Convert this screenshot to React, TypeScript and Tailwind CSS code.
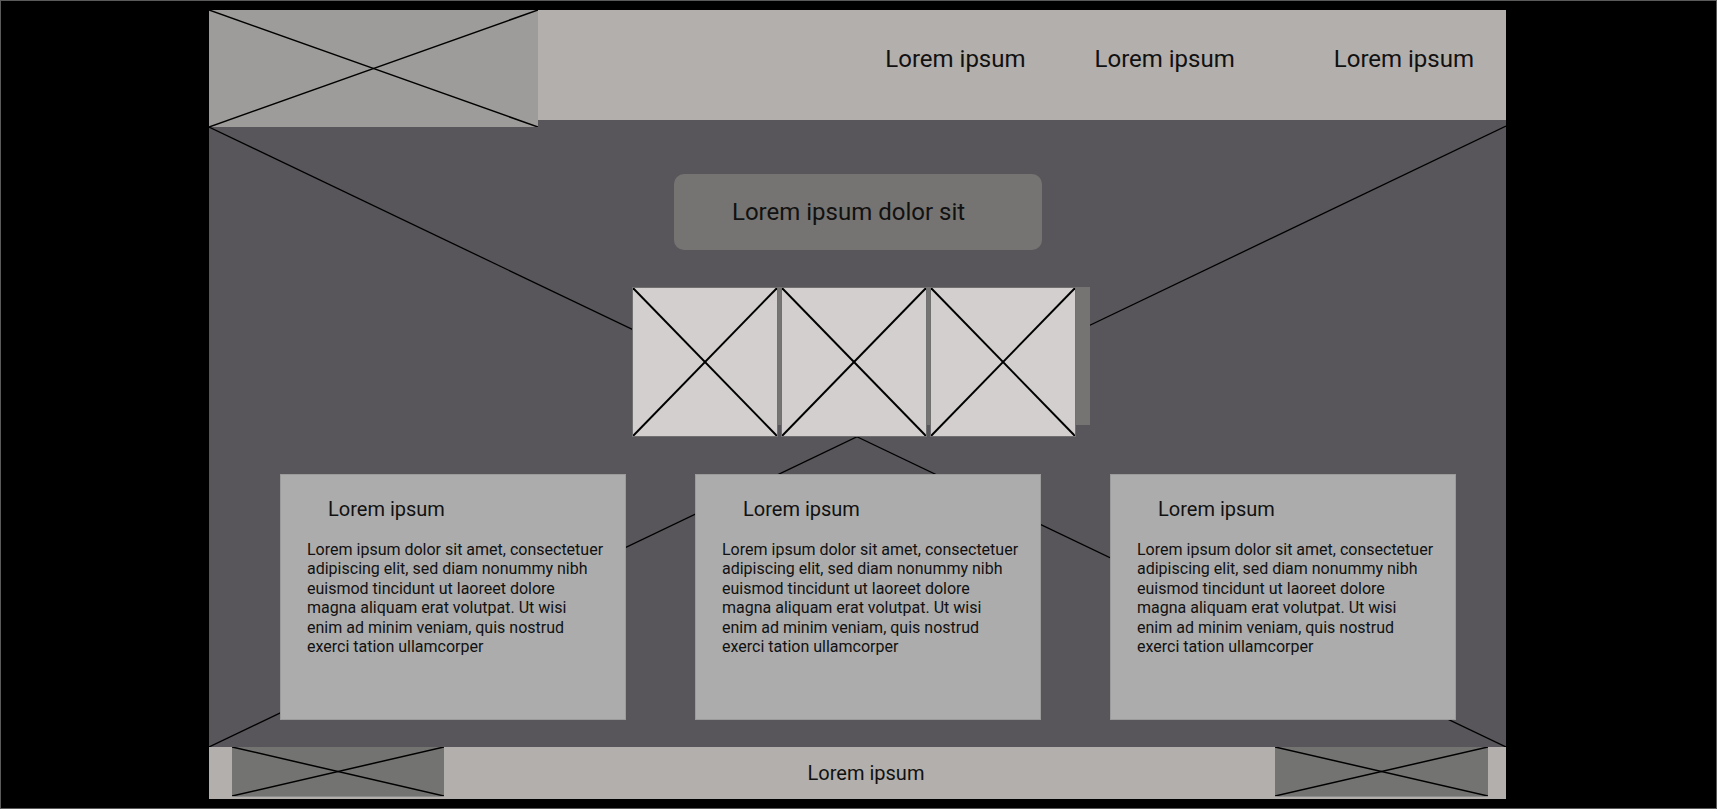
// Placeholder image: a filled box with a cross drawn corner to corner
function XBox({ className, stroke = 1.5 }: { className: string; stroke?: number }) {
  return (
    <div className={`relative shrink-0 ${className}`}>
      <svg className="absolute inset-0 w-full h-full" viewBox="0 0 100 100" preserveAspectRatio="none">
        <line x1="0" y1="0" x2="100" y2="100" stroke="#000" strokeWidth={stroke} vectorEffect="non-scaling-stroke" />
        <line x1="0" y1="100" x2="100" y2="0" stroke="#000" strokeWidth={stroke} vectorEffect="non-scaling-stroke" />
      </svg>
    </div>
  )
}

const BODY_LINES = [
  'Lorem ipsum dolor sit amet, consectetuer',
  'adipiscing elit, sed diam nonummy nibh',
  'euismod tincidunt ut laoreet dolore',
  'magna aliquam erat volutpat. Ut wisi',
  'enim ad minim veniam, quis nostrud',
  'exerci tation ullamcorper',
]

function Card({ title }: { title: string }) {
  return (
    <div className="w-[346px] h-[246px] shrink-0 bg-[#acacac] border border-[#9b9b9b] text-[#111]">
      <h3 className="pl-[47px] pt-[23px] text-[20px] leading-[23px] font-normal">{title}</h3>
      <p className="pl-[26px] pt-[19px] text-[16px] leading-[19.4px] whitespace-nowrap">
        {BODY_LINES.map((line) => (
          <span key={line} className="block">{line}</span>
        ))}
      </p>
    </div>
  )
}

export default function App() {
  return (
    <div className="w-[1717px] h-[809px] bg-black border border-[#5a5a5a] pl-[208px] pt-[9px] font-['Roboto',sans-serif] overflow-hidden">
      <div className="w-[1297px] flex flex-col">
        {/* Header */}
        <header className="flex h-[110px] bg-[#b3afac]">
          <XBox className="z-10 w-[329px] h-[117px] bg-[#9d9c9a]" />
          <nav className="flex-1 flex justify-end items-start pt-[35px] pr-[32px] text-[24px] leading-[28px] text-[#111]">
            <span>Lorem ipsum</span>
            <span className="ml-[69px]">Lorem ipsum</span>
            <span className="ml-[99px]">Lorem ipsum</span>
          </nav>
        </header>

        {/* Main */}
        <main className="relative h-[627px] bg-[#58565b]">
          <svg className="absolute inset-0" width="1297" height="627">
            <line x1="0" y1="7" x2="1297" y2="627" stroke="#000" strokeWidth="1.3" />
            <line x1="1297" y1="6" x2="0" y2="627" stroke="#000" strokeWidth="1.3" />
          </svg>

          <div className="relative flex flex-col">
            <div className="mt-[54px] ml-[465px] w-[368px] h-[76px] rounded-[10px] bg-[#767472] flex items-center pl-[58px] text-[24px] leading-[28px] text-[#111]">
              Lorem ipsum dolor sit
            </div>

            <div className="mt-[37px] ml-[423px] w-[458px] h-[138px] bg-[#757472] flex items-start gap-[3px]">
              <XBox className="w-[146px] h-[150px] bg-[#d4cfcf] border border-[#707070]" stroke={2} />
              <XBox className="w-[146px] h-[150px] bg-[#d4cfcf] border border-[#707070]" stroke={2} />
              <XBox className="w-[146px] h-[150px] bg-[#d4cfcf] border border-[#707070]" stroke={2} />
            </div>

            <div className="mt-[49px] flex pl-[71px] gap-[69px]">
              <Card title="Lorem ipsum" />
              <Card title="Lorem ipsum" />
              <Card title="Lorem ipsum" />
            </div>
          </div>
        </main>

        {/* Footer */}
        <footer className="flex items-start h-[52px] bg-[#b3afac]">
          <XBox className="ml-[23px] w-[212px] h-[50px] bg-[#737472] border-b border-[#8c8c8c]" />
          <div className="flex-1 self-center text-center pl-[13px] text-[20px] leading-[24px] text-[#111]">Lorem ipsum</div>
          <XBox className="mr-[18px] w-[213px] h-[50px] bg-[#737472] border-b border-[#8c8c8c]" />
        </footer>
      </div>
    </div>
  )
}
